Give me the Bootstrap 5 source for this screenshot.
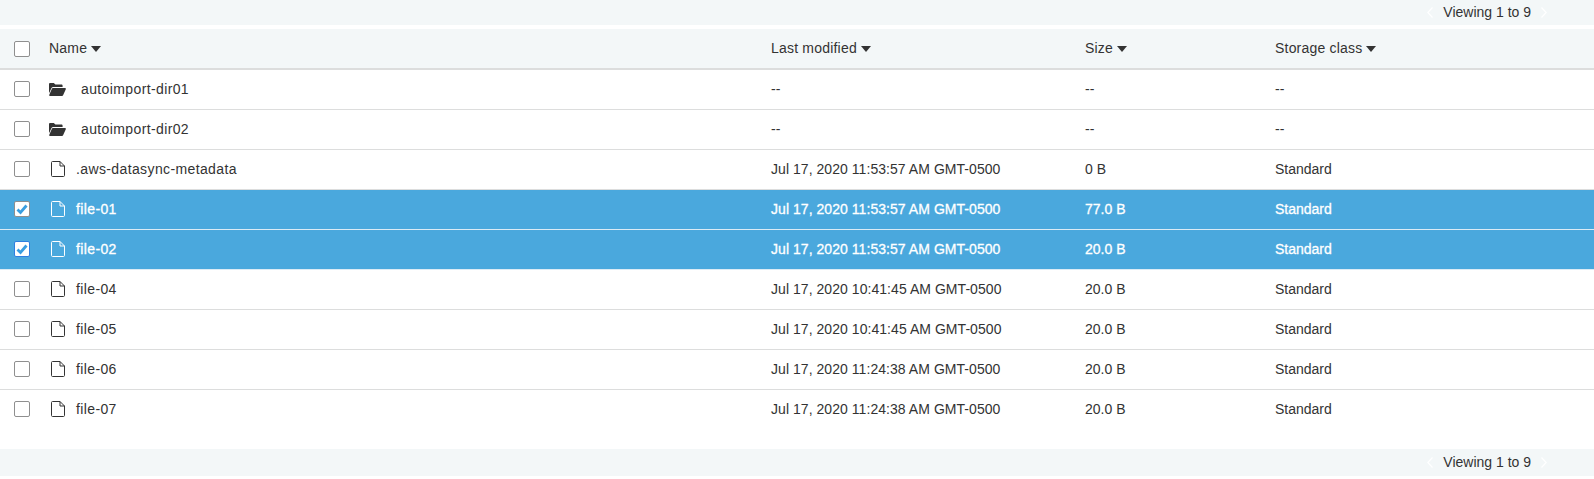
<!DOCTYPE html>
<html lang="en">
<head>
<meta charset="utf-8">
<title>Objects</title>
<link href="https://cdn.jsdelivr.net/npm/bootstrap@5.3.0/dist/css/bootstrap.min.css" rel="stylesheet">
<style>
html, body { background: #fff; }
body { font-family: "Liberation Sans", Arial, sans-serif; font-size: 14px; color: #333; }
.pager-strip { background: #f3f7f8; height: 25px; padding-right: 47px; gap: 10px; font-size: 14px; color: #333; }
.pager-strip.strip-foot { height: 27px; margin-top: 19px; }
.pager-strip svg { display: block; }
.obj-grid { margin-top: 4px; }
.obj-row { display: grid; grid-template-columns: 49px 722px 314px 190px 1fr; align-items: center; height: 40px; border-bottom: 1px solid #dcdddd; }
.obj-row.last-row { border-bottom-color: transparent; }
.obj-row.head-row { background: #f3f7f8; height: 41px; border-bottom: 2px solid #dcdddd; letter-spacing: .2px; }
.obj-row.picked { background: #4aa8dd; color: #fff; -webkit-text-stroke: .3px #fff; border-bottom-color: #dcebf5; }
.tick-cell { padding-left: 14px; }
.tick { width: 16px; height: 16px; border: 1px solid #8f8f8f; border-radius: 2px; background: #fff; display: block; margin-bottom: 1px; }
.head-row .tick { margin-bottom: 0; }
.tick.focused { border-color: #2f7fe0; }
.tick svg { display: block; }
.sort-car { display: inline-block; width: 0; height: 0; margin-left: 4px; vertical-align: 1px; border-left: 5px solid transparent; border-right: 5px solid transparent; border-top: 6px solid #333; }
.name-gap-dir { gap: 15px; letter-spacing: .38px; }
.name-gap-file { gap: 11px; padding-left: 2px; letter-spacing: .38px; }
.name-gap-dir svg, .name-gap-file svg { margin-bottom: 1px; }
.date-cell { letter-spacing: .05px; }
</style>
</head>
<body>
<div class="pager-strip d-flex justify-content-end align-items-center">
  <svg width="6" height="11" viewBox="0 0 6 11" fill="none" stroke="#fff" stroke-width="1.2"><path d="M5.500 .5 .8 5.500 5.500 10.500"/></svg>
  <span>Viewing 1 to 9</span>
  <svg width="6" height="11" viewBox="0 0 6 11" fill="none" stroke="#fff" stroke-width="1.2"><path d="M.5 .5 5.200 5.500 .5 10.500"/></svg>
</div>
<div class="obj-grid">
  <div class="obj-row head-row">
    <div class="tick-cell"><span class="tick"></span></div>
    <div>Name<span class="sort-car"></span></div>
    <div>Last modified<span class="sort-car"></span></div>
    <div>Size<span class="sort-car"></span></div>
    <div>Storage class<span class="sort-car"></span></div>
  </div>
  <div class="obj-row">
    <div class="tick-cell"><span class="tick"></span></div>
    <div class="d-flex align-items-center name-gap-dir"><svg width="17" height="13" viewBox="0 0 17 13" fill="#333"><path d="M0 1.2C0 .5.5 0 1.2 0h3.6l1.6 1.6h6c.7 0 1.2.5 1.2 1.2V4H4.2C3.4 4 2.8 4.400 2.500 5L0 10.200z"/><path d="M4 5h12c.7 0 1.100.6.8 1.200L14.200 12c-.2.6-.7 1-1.300 1H1c-.7 0-1-.6-.8-1.100L2.800 5.900C3 5.300 3.400 5 4 5z"/></svg><span>autoimport-dir01</span></div>
    <div>--</div><div>--</div><div>--</div>
  </div>
  <div class="obj-row">
    <div class="tick-cell"><span class="tick"></span></div>
    <div class="d-flex align-items-center name-gap-dir"><svg width="17" height="13" viewBox="0 0 17 13" fill="#333"><path d="M0 1.2C0 .5.5 0 1.2 0h3.6l1.6 1.6h6c.7 0 1.2.5 1.2 1.2V4H4.2C3.4 4 2.8 4.400 2.500 5L0 10.200z"/><path d="M4 5h12c.7 0 1.100.6.8 1.200L14.200 12c-.2.6-.7 1-1.300 1H1c-.7 0-1-.6-.8-1.100L2.800 5.900C3 5.300 3.400 5 4 5z"/></svg><span>autoimport-dir02</span></div>
    <div>--</div><div>--</div><div>--</div>
  </div>
  <div class="obj-row">
    <div class="tick-cell"><span class="tick"></span></div>
    <div class="d-flex align-items-center name-gap-file"><svg width="14" height="16" viewBox="0 0 14 16" fill="none" stroke="#333" stroke-width="1"><path d="M1.500 .5h7.500l4.500 4.500v9.500c0 .6-.4 1-1 1h-11c-.6 0-1-.4-1-1v-13c0-.6.4-1 1-1z"/><path d="M9 .5v4.500h4.500"/></svg><span>.aws-datasync-metadata</span></div>
    <div class="date-cell">Jul 17, 2020 11:53:57 AM GMT-0500</div><div>0 B</div><div>Standard</div>
  </div>
  <div class="obj-row picked">
    <div class="tick-cell"><span class="tick"><svg width="14" height="14" viewBox="0 0 14 14" fill="none" stroke="#3a9ee0" stroke-width="2.800"><path d="M2.500 7.500 5.500 10.500 11.500 3.500"/></svg></span></div>
    <div class="d-flex align-items-center name-gap-file"><svg width="14" height="16" viewBox="0 0 14 16" fill="none" stroke="#fff" stroke-width="1"><path d="M1.500 .5h7.500l4.500 4.500v9.500c0 .6-.4 1-1 1h-11c-.6 0-1-.4-1-1v-13c0-.6.4-1 1-1z"/><path d="M9 .5v4.500h4.500"/></svg><span>file-01</span></div>
    <div class="date-cell">Jul 17, 2020 11:53:57 AM GMT-0500</div><div>77.0 B</div><div>Standard</div>
  </div>
  <div class="obj-row picked">
    <div class="tick-cell"><span class="tick focused"><svg width="14" height="14" viewBox="0 0 14 14" fill="none" stroke="#3a9ee0" stroke-width="2.800"><path d="M2.500 7.500 5.500 10.500 11.500 3.500"/></svg></span></div>
    <div class="d-flex align-items-center name-gap-file"><svg width="14" height="16" viewBox="0 0 14 16" fill="none" stroke="#fff" stroke-width="1"><path d="M1.500 .5h7.500l4.500 4.500v9.500c0 .6-.4 1-1 1h-11c-.6 0-1-.4-1-1v-13c0-.6.4-1 1-1z"/><path d="M9 .5v4.500h4.500"/></svg><span>file-02</span></div>
    <div class="date-cell">Jul 17, 2020 11:53:57 AM GMT-0500</div><div>20.0 B</div><div>Standard</div>
  </div>
  <div class="obj-row">
    <div class="tick-cell"><span class="tick"></span></div>
    <div class="d-flex align-items-center name-gap-file"><svg width="14" height="16" viewBox="0 0 14 16" fill="none" stroke="#333" stroke-width="1"><path d="M1.500 .5h7.500l4.500 4.500v9.500c0 .6-.4 1-1 1h-11c-.6 0-1-.4-1-1v-13c0-.6.4-1 1-1z"/><path d="M9 .5v4.500h4.500"/></svg><span>file-04</span></div>
    <div class="date-cell">Jul 17, 2020 10:41:45 AM GMT-0500</div><div>20.0 B</div><div>Standard</div>
  </div>
  <div class="obj-row">
    <div class="tick-cell"><span class="tick"></span></div>
    <div class="d-flex align-items-center name-gap-file"><svg width="14" height="16" viewBox="0 0 14 16" fill="none" stroke="#333" stroke-width="1"><path d="M1.500 .5h7.500l4.500 4.500v9.500c0 .6-.4 1-1 1h-11c-.6 0-1-.4-1-1v-13c0-.6.4-1 1-1z"/><path d="M9 .5v4.500h4.500"/></svg><span>file-05</span></div>
    <div class="date-cell">Jul 17, 2020 10:41:45 AM GMT-0500</div><div>20.0 B</div><div>Standard</div>
  </div>
  <div class="obj-row">
    <div class="tick-cell"><span class="tick"></span></div>
    <div class="d-flex align-items-center name-gap-file"><svg width="14" height="16" viewBox="0 0 14 16" fill="none" stroke="#333" stroke-width="1"><path d="M1.500 .5h7.500l4.500 4.500v9.500c0 .6-.4 1-1 1h-11c-.6 0-1-.4-1-1v-13c0-.6.4-1 1-1z"/><path d="M9 .5v4.500h4.500"/></svg><span>file-06</span></div>
    <div class="date-cell">Jul 17, 2020 11:24:38 AM GMT-0500</div><div>20.0 B</div><div>Standard</div>
  </div>
  <div class="obj-row last-row">
    <div class="tick-cell"><span class="tick"></span></div>
    <div class="d-flex align-items-center name-gap-file"><svg width="14" height="16" viewBox="0 0 14 16" fill="none" stroke="#333" stroke-width="1"><path d="M1.500 .5h7.500l4.500 4.500v9.500c0 .6-.4 1-1 1h-11c-.6 0-1-.4-1-1v-13c0-.6.4-1 1-1z"/><path d="M9 .5v4.500h4.500"/></svg><span>file-07</span></div>
    <div class="date-cell">Jul 17, 2020 11:24:38 AM GMT-0500</div><div>20.0 B</div><div>Standard</div>
  </div>
</div>
<div class="pager-strip strip-foot d-flex justify-content-end align-items-center">
  <svg width="6" height="11" viewBox="0 0 6 11" fill="none" stroke="#fff" stroke-width="1.2"><path d="M5.500 .5 .8 5.500 5.500 10.500"/></svg>
  <span>Viewing 1 to 9</span>
  <svg width="6" height="11" viewBox="0 0 6 11" fill="none" stroke="#fff" stroke-width="1.2"><path d="M.5 .5 5.200 5.500 .5 10.500"/></svg>
</div>
<script src="https://cdn.jsdelivr.net/npm/bootstrap@5.3.0/dist/js/bootstrap.bundle.min.js"></script>
</body>
</html>
